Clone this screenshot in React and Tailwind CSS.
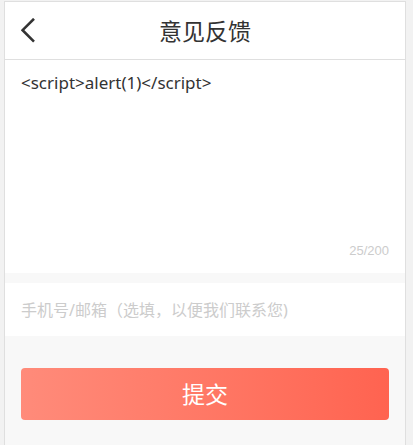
import { useState } from "react";

const MAX_LENGTH = 200;

export default function App() {
  const [content, setContent] = useState("<script>alert(1)</script>");
  const [contact, setContact] = useState("");

  return (
    <div className="min-h-screen bg-[#f2f2f2] pt-px pr-[7px] pl-1 font-['Noto_Sans','Noto_Sans_CJK_SC',sans-serif] text-[#333]">
      <main className="flex min-h-[calc(100vh-1px)] flex-col border-x border-t border-[#dfdfdf] bg-[#f8f8f8]">
        <header className="grid h-[58px] grid-cols-[48px_1fr_48px] items-center border-b border-[#dfdfdf] bg-white">
          <button type="button" aria-label="返回" className="flex h-full items-center pl-4">
            <svg width="14" height="26" viewBox="0 0 14 26" fill="none" stroke="#333" strokeWidth="2.6">
              <path d="M13 0.8 1.6 12.2 13 23.6" />
            </svg>
          </button>
          <h1 className="text-center text-[23px] leading-8">意见反馈</h1>
        </header>

        <form onSubmit={(e) => e.preventDefault()}>
          <section className="bg-white px-4 py-3">
            <textarea
              aria-label="意见反馈"
              maxLength={MAX_LENGTH}
              value={content}
              onChange={(e) => setContent(e.target.value)}
              className="block h-[169px] w-full resize-none text-[17px] leading-[22px] outline-none"
            />
            <p className="text-right font-['Liberation_Sans',sans-serif] text-[13px] leading-5 text-[#ccc]">
              {content.length}/{MAX_LENGTH}
            </p>
          </section>

          <input
            type="text"
            aria-label="手机号/邮箱"
            placeholder="手机号/邮箱（选填，以便我们联系您)"
            value={contact}
            onChange={(e) => setContact(e.target.value)}
            className="mt-2.5 block h-[53px] w-full bg-white px-4 text-base outline-none placeholder:text-[#ccc]"
          />

          <div className="px-4 pt-8">
            <button
              type="submit"
              className="h-[52px] w-full rounded bg-linear-to-r from-[#ff8b7a] to-[#ff6350] text-[23px] text-white"
            >
              提交
            </button>
          </div>
        </form>
      </main>
    </div>
  );
}
